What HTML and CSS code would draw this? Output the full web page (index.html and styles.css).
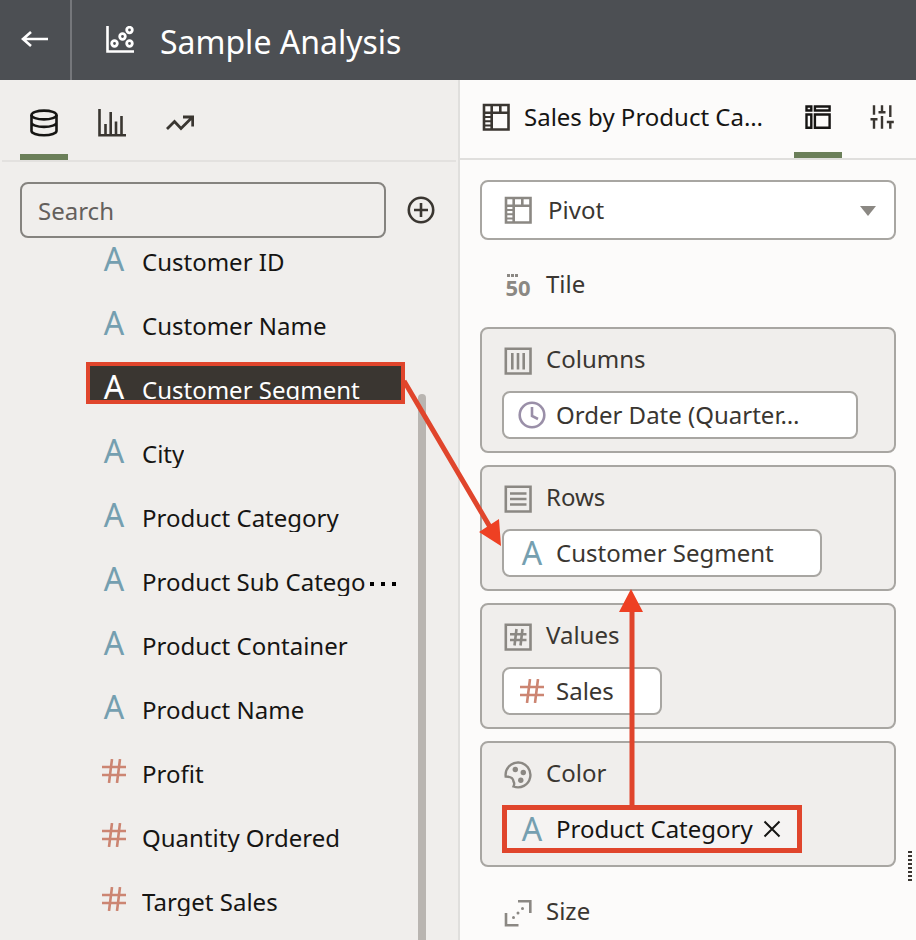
FILE: index.html
```html
<!DOCTYPE html>
<html lang="en">
<head>
<meta charset="utf-8">
<title>Sample Analysis</title>
<link rel="stylesheet" href="styles.css">
</head>
<body>
<svg class="defs" aria-hidden="true">
  <symbol id="hash" viewBox="0 0 24 24"><path d="M0 8h24M0 16h24M10 0L7 24M18 0l-3 24" fill="none" stroke="currentColor" stroke-width="2.600"/></symbol>
  <symbol id="pivot" viewBox="0 0 28 28"><path d="M2 2h24.500v24.500H2zM2 9.700h24.500M9.700 2v24.500M18.300 2v7.700" fill="none" stroke="currentColor" stroke-width="2.600"/><path d="M2 14h7.700M2 18.300h7.700M2 22.500h7.700" fill="none" stroke="currentColor" stroke-width="2"/></symbol>
</svg>

<header class="topbar">
  <button class="back" aria-label="Back">
    <svg width="28" height="20" viewBox="0 0 28 20"><path d="M27 9H2M10 2L2 9l8 7" fill="none" stroke="currentColor" stroke-width="2.600"/></svg>
  </button>
  <svg class="topbar-icon" width="28" height="28" viewBox="0 0 28 28" fill="none" stroke="currentColor"><path d="M1.500 0v25.500H28" stroke-width="2.600"/><g stroke-width="2.800"><circle cx="23.500" cy="4" r="2.800"/><circle cx="16.500" cy="10.500" r="2.800"/><circle cx="8.500" cy="17.500" r="2.800"/><circle cx="23.500" cy="17.500" r="2.800"/></g></svg>
  <h1>Sample Analysis</h1>
</header>

<div class="workspace">
  <aside class="data-panel">
    <nav class="tabs">
      <button class="tab active" aria-label="Data">
        <svg width="28" height="28" viewBox="0 0 28 28" fill="none" stroke="currentColor" stroke-width="2.600"><ellipse cx="14" cy="6" rx="12.500" ry="4.400"/><path d="M1.500 6v16c0 2.300 5.600 4.200 12.500 4.200s12.500-1.900 12.500-4.200V6M1.500 13.500c0 2.500 5.600 4.400 12.500 4.400s12.500-1.900 12.500-4.400"/></svg>
      </button>
      <button class="tab" aria-label="Visualizations">
        <svg width="28" height="28" viewBox="0 0 28 28" fill="none" stroke="currentColor" stroke-width="2.600"><path d="M1.500 0v26.300H28M7.500 15v11M12.700 3v23M18 12.500V26M23.500 7v19"/></svg>
      </button>
      <button class="tab" aria-label="Analytics">
        <svg width="28" height="28" viewBox="0 0 28 28" fill="none" stroke="currentColor" stroke-width="2.800"><path d="M1 20l7.500-7.500 6.500 7L26 8.500M17 8h9.700v9.500"/></svg>
      </button>
    </nav>
    <div class="search-row">
      <input type="search" placeholder="Search" aria-label="Search">
      <button class="add" aria-label="Add">
        <svg width="28" height="28" viewBox="0 0 28 28" fill="none" stroke="currentColor" stroke-width="2.600"><circle cx="14" cy="14" r="12.200"/><path d="M14 7v14M7 14h14"/></svg>
      </button>
    </div>
    <div class="list-area">
      <ul class="fields">
        <li><button class="field"><span class="type attr">A</span><span class="label">Customer ID</span></button></li>
        <li><button class="field"><span class="type attr">A</span><span class="label">Customer Name</span></button></li>
        <li><button class="field selected"><span class="type attr">A</span><span class="label">Customer Segment</span></button></li>
        <li><button class="field"><span class="type attr">A</span><span class="label">City</span></button></li>
        <li><button class="field"><span class="type attr">A</span><span class="label">Product Category</span></button></li>
        <li><button class="field"><span class="type attr">A</span><span class="label">Product Sub Catego</span><svg class="more" width="32" height="12" viewBox="0 0 32 12"><path d="M4 3h4v4H4zM15 3h4v4h-4zM26 3h4v4h-4z"/></svg></button></li>
        <li><button class="field"><span class="type attr">A</span><span class="label">Product Container</span></button></li>
        <li><button class="field"><span class="type attr">A</span><span class="label">Product Name</span></button></li>
        <li><button class="field"><span class="type measure"><svg width="24" height="24"><use href="#hash"/></svg></span><span class="label">Profit</span></button></li>
        <li><button class="field"><span class="type measure"><svg width="24" height="24"><use href="#hash"/></svg></span><span class="label">Quantity Ordered</span></button></li>
        <li><button class="field"><span class="type measure"><svg width="24" height="24"><use href="#hash"/></svg></span><span class="label">Target Sales</span></button></li>
      </ul>
      <div class="scrollbar"></div>
    </div>
  </aside>

  <main class="grammar-panel">
    <div class="viz-header">
      <svg width="28" height="28"><use href="#pivot"/></svg>
      <h2>Sales by Product Ca…</h2>
      <nav class="viz-tabs">
        <button class="tab active" aria-label="Grammar">
          <svg width="28" height="28" viewBox="0 0 28 28" fill="none" stroke="currentColor" stroke-width="2.400"><path d="M2.500 2.500h4.800v4H2.500zM10.900 2.500h14.700v4H10.900zM2.500 10.500h4.800v13.200H2.500zM10.900 10.500h14.700v13.200H10.900z"/></svg>
        </button>
        <button class="tab" aria-label="Properties">
          <svg width="28" height="28" viewBox="0 0 28 28" fill="none" stroke="currentColor" stroke-width="2.400"><path d="M6 1.300v9.400M14 1.300v7M22.300 1.300V13M6 15.300v9.400M14 12v12.700M22.300 18v6.700M2.500 15.300h7M10.500 8.300h7M18.800 18h7"/></svg>
        </button>
      </nav>
    </div>

    <div class="zones">
      <div class="viz-type">
        <svg class="viz-icon" width="28" height="28"><use href="#pivot"/></svg>
        <select aria-label="Visualization type"><option>Pivot</option></select>
        <svg class="caret" width="16" height="10" viewBox="0 0 16 10"><path d="M0 0h16L8 10z" fill="currentColor"/></svg>
      </div>

      <section class="zone">
        <h3><span class="tile-icon">50</span>Tile</h3>
      </section>

      <section class="zone card">
        <h3><svg width="28" height="28" viewBox="0 0 28 28" fill="none" stroke="currentColor" stroke-width="2.600"><path d="M1.800 1.800h24.700v24.700H1.800zM8.300 6v16.500M14 6v16.500M19.700 6v16.500"/></svg>Columns</h3>
        <div class="pill long"><span class="type date"><svg width="28" height="28" viewBox="0 0 28 28" fill="none" stroke="currentColor" stroke-width="2.600"><circle cx="14" cy="14" r="12.300"/><path d="M14 6v9l6 3"/></svg></span><span class="pill-text">Order Date (Quarter…</span></div>
      </section>

      <section class="zone card">
        <h3><svg width="28" height="28" viewBox="0 0 28 28" fill="none" stroke="currentColor" stroke-width="2.600"><path d="M1.800 1.800h24.700v24.700H1.800zM6 8.500h16.500M6 14h16.500M6 19.500h16.500"/></svg>Rows</h3>
        <div class="pill"><span class="type attr">A</span><span class="pill-text">Customer Segment</span></div>
      </section>

      <section class="zone card">
        <h3><svg width="28" height="28" viewBox="0 0 28 28" fill="none" stroke="currentColor" stroke-width="2.600"><path d="M1.800 1.800h24.700v24.700H1.800zM6 11.300h16.500M6 17h16.500M12.500 6l-2 16.500M18.500 6l-2 16.500"/></svg>Values</h3>
        <div class="pill"><span class="type measure"><svg width="24" height="24"><use href="#hash"/></svg></span><span class="pill-text">Sales</span></div>
      </section>

      <section class="zone card">
        <h3><svg width="28" height="28" viewBox="0 0 28 28" fill="none" stroke="currentColor" stroke-width="2.400"><path d="M1.700 15.500A12.400 12.400 0 1 1 9.500 25.500c1-2 1-3.500 0-5-.3-3-3-5-7.800-5z"/><g fill="currentColor" stroke="none"><circle cx="11.300" cy="8.500" r="2.700"/><circle cx="19.300" cy="11.500" r="2.700"/><circle cx="16.800" cy="19.300" r="2.700"/></g></svg>Color</h3>
        <div class="pill marked"><span class="type attr">A</span><span class="pill-text">Product Category</span><button class="remove" aria-label="Remove"><svg width="18" height="18" viewBox="0 0 18 18"><path d="M1.500 1.500l15 15M16.500 1.500l-15 15" stroke="currentColor" stroke-width="2"/></svg></button></div>
      </section>

      <section class="zone">
        <h3><svg width="28" height="28" viewBox="0 0 28 28" fill="none" stroke="currentColor" stroke-width="2.600"><path d="M14 2.200h12.300V14M2 14v12.300h12.500"/><g fill="currentColor" stroke="none"><circle cx="9.500" cy="18.500" r="1.500"/><circle cx="14" cy="14" r="1.500"/><circle cx="18.500" cy="9.500" r="1.500"/></g></svg>Size</h3>
      </section>
    </div>
    <div class="grip"></div>
  </main>
</div>

<svg class="annotations" width="916" height="940" viewBox="0 0 916 940" aria-hidden="true">
  <path d="M404 381L490 527M632 806V606" fill="none" stroke="#e0452c" stroke-width="5"/>
  <path d="M501 546l-22-14 20-13zM631 589l12 23h-24z" fill="#ee4023"/>
</svg>
</body>
</html>
```
FILE: styles.css
```css
* {
  box-sizing: border-box;
}

body {
  margin: 0;
  height: 100vh;
  overflow: hidden;
  position: relative;
  display: flex;
  flex-direction: column;
  background: #fcfbfa;
  color: #161513;
  font: 24px/32px "Noto Sans", sans-serif;
}

h1, h2, h3, ul {
  margin: 0;
  padding: 0;
  font-weight: 400;
}

ul {
  list-style: none;
}

svg {
  display: block;
  flex: none;
}

.defs {
  position: absolute;
  width: 0;
  height: 0;
}

button {
  display: flex;
  align-items: center;
  justify-content: center;
  padding: 0;
  border: 0;
  background: none;
  color: inherit;
  font: inherit;
}

/* Top bar */
.topbar {
  flex: none;
  height: 80px;
  display: flex;
  align-items: center;
  background: #4c4f53;
  color: #fff;
}

.back {
  width: 72px;
  height: 80px;
  border-right: 2px solid #75777b;
}

.topbar-icon {
  margin-left: 34px;
}

.topbar h1 {
  margin-left: 26px;
  padding-top: 4px;
  font-size: 32px;
  line-height: 40px;
}

.workspace {
  flex: 1;
  min-height: 0;
  display: grid;
  grid-template-columns: 460px 1fr;
}

.tab {
  width: 48px;
  height: 100%;
  padding-top: 4px;
  border-bottom: 6px solid transparent;
  color: #3a3631;
}

.tab.active {
  border-bottom-color: #6b7f59;
  color: #161513;
}

/* Data panel */
.data-panel {
  min-height: 0;
  overflow: hidden;
  display: flex;
  flex-direction: column;
  background: #f0eeec;
  border-right: 2px solid #e0dfdd;
}

.tabs {
  flex: none;
  height: 82px;
  display: flex;
  gap: 20px;
  margin: 0 2px;
  padding: 0 18px;
  border-bottom: 2px solid #e3e1df;
}

.tabs .tab {
  padding-top: 12px;
}

.search-row {
  flex: none;
  display: flex;
  align-items: center;
  gap: 21px;
  padding: 20px 23px 0 20px;
}

.add {
  color: #3a3631;
}

.search-row input {
  flex: 1;
  min-width: 0;
  height: 56px;
  padding: 0 16px;
  border: 2px solid #85837f;
  border-radius: 8px;
  background: transparent;
  color: inherit;
  font: inherit;
}

.search-row input::placeholder {
  color: #64605c;
  opacity: 1;
}

.list-area {
  flex: 1;
  min-height: 0;
  display: flex;
  gap: 13px;
  margin-top: -4px;
  padding: 0 32px 0 86px;
}

.fields {
  flex: 1;
  min-width: 0;
}

.field {
  width: 100%;
  height: 42px;
  margin-bottom: 22px;
  padding: 8px 0 0 10px;
  border: 4px solid transparent;
  align-items: baseline;
  justify-content: flex-start;
  white-space: nowrap;
}

.field.selected {
  overflow: hidden;
  border-color: #e0452c;
  background: #3a3631;
  color: #fff;
}

.field .label {
  flex: none;
  height: 30px;
  margin-left: 14px;
  overflow: hidden;
}

.type {
  flex: none;
  width: 28px;
  display: flex;
  justify-content: center;
}

.attr {
  color: #759fb0;
  font-size: 32px;
  line-height: 24px;
}

.selected .attr {
  color: #fff;
}

.measure {
  color: #cc8572;
}

.date {
  color: #9a8fa8;
}

.scrollbar {
  width: 8px;
  margin-top: 160px;
  border-radius: 4px 4px 0 0;
  background: #b9b5b1;
}

/* Grammar panel */
.grammar-panel {
  min-width: 0;
  position: relative;
  overflow: hidden;
}

.viz-header {
  height: 80px;
  display: flex;
  align-items: center;
  gap: 14px;
  padding: 0 10px 4px 22px;
  border-bottom: 2px solid #e0dfdd;
}

.viz-header > svg {
  color: #3a3631;
}

.viz-header h2 {
  flex: 1;
  min-width: 0;
  overflow: hidden;
  white-space: nowrap;
  font-size: 24px;
}

.viz-tabs {
  align-self: flex-start;
  height: 78px;
  display: flex;
  gap: 16px;
}

.zones {
  display: flex;
  flex-direction: column;
  gap: 12px;
  padding: 20px 20px 0;
}

.viz-type {
  position: relative;
  color: #8b8883;
}

.viz-type select {
  display: block;
  width: 100%;
  height: 60px;
  padding: 0 62px;
  appearance: none;
  border: 2px solid #a8a6a2;
  border-radius: 8px;
  background: #fff;
  color: #3a3631;
  font: inherit;
  text-indent: 4px;
}

.viz-icon {
  position: absolute;
  left: 24px;
  top: 16px;
}

.caret {
  position: absolute;
  right: 20px;
  top: 26px;
}

.zone {
  height: 63px;
  padding: 14px 20px 12px;
  border: 2px solid transparent;
  border-radius: 8px;
}

.zone.card {
  height: auto;
  border-color: #a8a6a2;
  background: #f0eeec;
}

.zone h3 {
  display: flex;
  align-items: flex-end;
  gap: 14px;
  padding-left: 2px;
  color: #3a3631;
  font-size: 24px;
}

.zone h3 svg,
.tile-icon {
  color: #8b8883;
}

.tile-icon {
  width: 28px;
  text-align: center;
  font-size: 22px;
  font-weight: 700;
  line-height: 26px;
  background: repeating-linear-gradient(90deg, #8b8883 0 3px, transparent 3px 4px) 3px 0 / 11px 3px no-repeat;
}

.pill {
  width: fit-content;
  max-width: 100%;
  height: 48px;
  display: flex;
  align-items: center;
  gap: 10px;
  margin-top: 16px;
  padding: 0 46px 0 14px;
  border: 2px solid #a8a6a2;
  border-radius: 8px;
  background: #fff;
  color: #3a3631;
  white-space: nowrap;
}

.pill.long {
  width: auto;
  margin-right: 16px;
}

.pill.marked {
  padding: 0 16px 0 11px;
  border: 5px solid #e0452c;
  border-radius: 0;
  background: #f5f3f2;
  color: #161513;
}

.grip {
  position: absolute;
  right: 4px;
  top: 771px;
  width: 4px;
  height: 30px;
  background: repeating-linear-gradient(#3a3631 0 2px, transparent 2px 4px);
}

.annotations {
  position: absolute;
  left: 0;
  top: 0;
  pointer-events: none;
}
```
